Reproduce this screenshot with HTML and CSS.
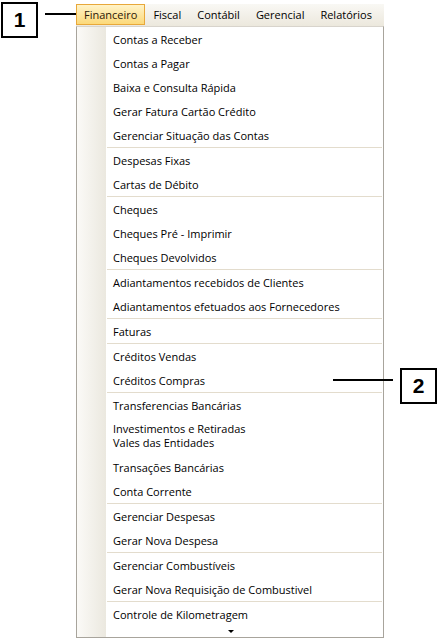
FILE: index.html
```html
<!DOCTYPE html>
<html lang="pt">
<head>
<meta charset="utf-8">
<link rel="stylesheet" href="styles.css">
</head>
<body>
<div class="page">
  <div class="callout callout-1">1</div>
  <div class="leader leader-1"></div>
  <div class="menubar">
    <div class="top-item active">Financeiro</div>
    <div class="top-item">Fiscal</div>
    <div class="top-item">Contábil</div>
    <div class="top-item">Gerencial</div>
    <div class="top-item">Relatórios</div>
  </div>
  <div class="dropdown">
    <div class="item">Contas a Receber</div>
    <div class="item">Contas a Pagar</div>
    <div class="item">Baixa e Consulta Rápida</div>
    <div class="item">Gerar Fatura Cartão Crédito</div>
    <div class="item">Gerenciar Situação das Contas</div>
    <div class="sep"></div>
    <div class="item">Despesas Fixas</div>
    <div class="item">Cartas de Débito</div>
    <div class="sep"></div>
    <div class="item">Cheques</div>
    <div class="item">Cheques Pré - Imprimir</div>
    <div class="item">Cheques Devolvidos</div>
    <div class="sep"></div>
    <div class="item">Adiantamentos recebidos de Clientes</div>
    <div class="item">Adiantamentos efetuados aos Fornecedores</div>
    <div class="sep"></div>
    <div class="item">Faturas</div>
    <div class="sep"></div>
    <div class="item">Créditos Vendas</div>
    <div class="item">Créditos Compras</div>
    <div class="sep"></div>
    <div class="item">Transferencias Bancárias</div>
    <div class="item two-line">Investimentos e Retiradas<br>Vales das Entidades</div>
    <div class="item">Transações Bancárias</div>
    <div class="item">Conta Corrente</div>
    <div class="sep"></div>
    <div class="item">Gerenciar Despesas</div>
    <div class="item">Gerar Nova Despesa</div>
    <div class="sep"></div>
    <div class="item">Gerenciar Combustíveis</div>
    <div class="item">Gerar Nova Requisição de Combustivel</div>
    <div class="sep"></div>
    <div class="item">Controle de Kilometragem</div>
    <div class="more"><span class="arrow"></span></div>
  </div>
  <div class="leader leader-2"></div>
  <div class="callout callout-2">2</div>
</div>
</body>
</html>
```
FILE: styles.css
```css
html, body {
  margin: 0;
  padding: 0;
  background: #ffffff;
}
.page {
  position: relative;
  width: 438px;
  height: 640px;
  padding-top: 4px;
  box-sizing: border-box;
  font-family: "Open Sans", "Noto Sans", sans-serif;
  font-size: 11px;
  color: #000;
}
.callout {
  position: absolute;
  box-sizing: border-box;
  border: 2px solid #000;
  background: #fff;
  font-family: "Liberation Sans", Arial, sans-serif;
  font-weight: bold;
  font-size: 21px;
  display: flex;
  align-items: center;
  justify-content: center;
}
.callout-1 { left: 1px; top: 2px; width: 37px; height: 36px; }
.callout-2 { left: 400px; top: 368px; width: 37px; height: 36px; }
.leader {
  position: absolute;
  height: 2px;
  background: #000;
}
.leader-1 { left: 45px; top: 13px; width: 31px; }
.leader-2 { left: 333px; top: 379px; width: 60px; }

.menubar {
  margin-left: 76px;
  width: 308px;
  height: 22px;
  display: flex;
  align-items: stretch;
  background: linear-gradient(#f9f8f4, #ece8dd);
}
.top-item {
  display: flex;
  align-items: center;
  padding: 0 7px 1px;
  border: 1px solid transparent;
  height: 21px;
  box-sizing: border-box;
}
.top-item.active {
  border-color: #e8a83a;
  background: linear-gradient(#fff3c8, #fcd97a);
  color: #2b1608;
}

.dropdown {
  margin-left: 76px;
  width: 308px;
  box-sizing: border-box;
  border: 1px solid #a8a49c;
  border-top-color: #d8d4cc;
  display: flex;
  flex-direction: column;
  background:
    linear-gradient(to right, #fbfaf7, #ebe8df) 0 0 / 29px 100% no-repeat,
    #ffffff;
}
.item {
  height: 24px;
  display: flex;
  align-items: center;
  padding-left: 36px;
  white-space: nowrap;
}
.item.two-line {
  height: 38px;
  line-height: 14px;
}
.sep {
  height: 1px;
  margin-left: 30px;
  margin-right: 1px;
  background: #e3dccd;
}
.more {
  height: 11px;
  display: flex;
  justify-content: center;
  padding-left: 1px;
}
.arrow {
  margin-top: 4px;
  width: 0;
  height: 0;
  border-left: 3px solid transparent;
  border-right: 3px solid transparent;
  border-top: 3px solid #000;
}
```
